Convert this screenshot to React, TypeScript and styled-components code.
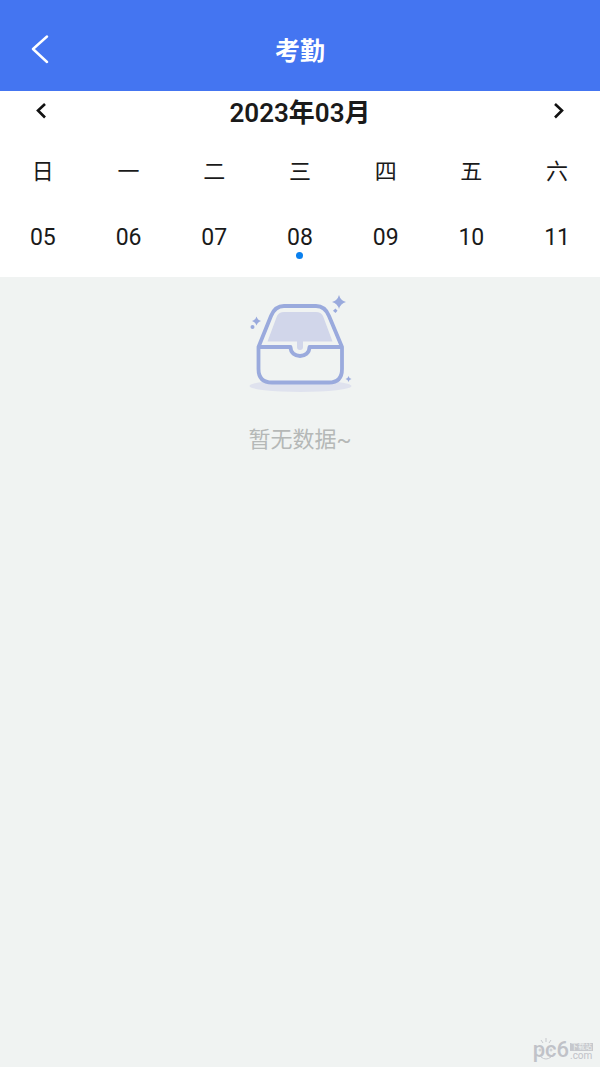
import React from "react";
import styled, { createGlobalStyle } from "styled-components";

const GlobalStyle = createGlobalStyle`
  *, *::before, *::after { box-sizing: border-box; }
  body {
    margin: 0;
    background: #f0f3f2;
    color: #1a1a1a;
    font-family: Roboto, "Noto Sans CJK SC", sans-serif;
  }
`;

const Page = styled.div`
  display: flex;
  flex-direction: column;
  min-height: 100vh;
`;

const Header = styled.header`
  display: grid;
  grid-template-columns: 80px 1fr 80px;
  align-items: center;
  padding: 24px 0 15px;
  background: #4475f1;
  color: #fff;
`;

const IconButton = styled.button`
  display: flex;
  align-items: center;
  justify-content: center;
  height: 52px;
  padding: 0;
  border: 0;
  background: none;
  color: inherit;
  cursor: pointer;
`;

const Title = styled.h1`
  margin: 0;
  padding-top: 4px;
  font-size: 25px;
  line-height: 48px;
  font-weight: 700;
  text-align: center;
`;

const Calendar = styled.section`
  padding-bottom: 18px;
  background: #fff;
`;

const MonthBar = styled.div`
  display: grid;
  grid-template-columns: 82px 1fr 82px;
  align-items: start;
`;

const MonthButton = styled(IconButton)`
  height: 40px;
`;

const Month = styled.h2`
  margin: 0;
  font-size: 26px;
  line-height: 44px;
  font-weight: 600;
  text-align: center;
`;

const Week = styled.table`
  width: 100%;
  border-collapse: collapse;
  table-layout: fixed;
`;

const WeekDay = styled.th`
  height: 70px;
  padding: 4px 0 0;
  font-size: 22px;
  line-height: 32px;
  font-weight: 400;
`;

const DayCell = styled.td`
  padding: 0;
`;

const DayButton = styled.button<{ $marked?: boolean }>`
  display: flex;
  flex-direction: column;
  align-items: center;
  width: 100%;
  padding: 19px 0 0;
  border: 0;
  background: none;
  color: inherit;
  font-family: inherit;
  font-size: 23px;
  line-height: 28px;
  cursor: pointer;

  &::after {
    content: "";
    width: 7px;
    height: 7px;
    border-radius: 50%;
    background: ${(p) => (p.$marked ? "#0a80ee" : "transparent")};
  }
`;

const Empty = styled.main`
  flex: 1;
  display: flex;
  flex-direction: column;
  align-items: center;
  padding-top: 13px;
`;

const EmptyText = styled.p`
  margin: 28px 0 0;
  color: #b5b8b7;
  font-size: 22px;
  line-height: 32px;
`;

const Watermark = styled.footer`
  display: flex;
  justify-content: flex-end;
  align-items: flex-end;
  gap: 1px;
  padding: 0 7px 6px;
  color: #c0c2c8;
`;

const Brand = styled.span`
  position: relative;
  font-size: 22px;
  line-height: 22px;
  font-weight: 500;
`;

const Rays = styled.svg`
  position: absolute;
  left: 4px;
  top: -3px;
`;

const BrandSide = styled.span`
  display: flex;
  flex-direction: column;
  font-size: 10px;
  line-height: 10px;
`;

const BrandTag = styled.span`
  padding: 0 1px;
  background: #c6c8cd;
  color: #f0f3f2;
  font-size: 7px;
  line-height: 8px;
`;

const weekDays = ["日", "一", "二", "三", "四", "五", "六"];
const days = ["05", "06", "07", "08", "09", "10", "11"];
const today = "08";

function EmptyBox() {
  return (
    <svg width="112" height="106" viewBox="244 290 112 106" fill="none" aria-hidden="true">
      <ellipse cx="300.500" cy="386" rx="51" ry="6" fill="#dfe2ee" />
      <path
        d="M258.500 347 271 316Q275 306 284 306H316Q325 306 329 316L342 347V369Q342 382.500 329 382.500H272Q258.500 382.500 258.500 369Z"
        fill="#f0f3f2"
      />
      <path d="M284 312H316Q321 312 323 316L332.500 341.500H303V347Q303 350 300 350T297 347V341.500H267.500L277 316Q279 312 284 312Z" fill="#d1d6ea" />
      <g stroke="#9aaadd" strokeWidth="3.800" strokeLinejoin="round">
        <path d="M258.500 347 271 316Q275 306 284 306H316Q325 306 329 316L342 347V369Q342 382.500 329 382.500H272Q258.500 382.500 258.500 369Z" />
        <path d="M258.500 347H290.500C290.500 359 309.500 359 309.500 347H342" />
      </g>
      <g fill="#9aaadd">
        <path d="M339 295Q340.500 300.500 346 302Q340.500 303.500 339 309Q337.500 303.500 332 302Q337.500 300.500 339 295Z" />
        <path d="M256.500 316.500Q257.500 320 261 321Q257.500 322 256.500 325.500Q255.500 322 252 321Q255.500 320 256.500 316.500Z" />
        <path d="M348.500 376Q349 378.500 351.500 379Q349 379.500 348.500 382Q348 379.500 345.500 379Q348 378.500 348.500 376Z" />
        <path d="M335.500 308.500 337.500 310.800 335.500 313 333 310.800Z" />
        <circle cx="252.500" cy="327" r="2" />
      </g>
    </svg>
  );
}

export default function App() {
  return (
    <Page>
      <GlobalStyle />
      <Header>
        <IconButton type="button" aria-label="返回">
          <svg width="20" height="30" viewBox="0 0 20 30" fill="none" stroke="currentColor" strokeWidth="2.400" strokeLinecap="round" strokeLinejoin="round">
            <path d="M17 1.500 3 14 17 27" />
          </svg>
        </IconButton>
        <Title>考勤</Title>
      </Header>
      <Calendar>
        <MonthBar>
          <MonthButton type="button" aria-label="上个月">
            <svg width="12" height="18" viewBox="0 0 12 18" fill="none" stroke="#111" strokeWidth="2.600">
              <path d="M10 2 3 8.500 10 15.500" />
            </svg>
          </MonthButton>
          <Month>2023年03月</Month>
          <MonthButton type="button" aria-label="下个月">
            <svg width="12" height="18" viewBox="0 0 12 18" fill="none" stroke="#111" strokeWidth="2.600">
              <path d="M2 2 9 8.500 2 15.500" />
            </svg>
          </MonthButton>
        </MonthBar>
        <Week>
          <thead>
            <tr>
              {weekDays.map((d) => (
                <WeekDay key={d} scope="col">{d}</WeekDay>
              ))}
            </tr>
          </thead>
          <tbody>
            <tr>
              {days.map((d) => (
                <DayCell key={d}>
                  <DayButton type="button" $marked={d === today}>{d}</DayButton>
                </DayCell>
              ))}
            </tr>
          </tbody>
        </Week>
      </Calendar>
      <Empty>
        <EmptyBox />
        <EmptyText>暂无数据~</EmptyText>
      </Empty>
      <Watermark>
        <Brand>
          pc6
          <Rays width="18" height="24" viewBox="0 0 18 24" fill="none" stroke="#c6c8cd" aria-hidden="true">
            <path d="M4 4 6 7M9 2V6M14 4 12 7M4 21Q9 25 14 21" />
            <circle cx="3" cy="14" r="1" />
            <circle cx="14" cy="14" r="1" />
          </Rays>
        </Brand>
        <BrandSide>
          <BrandTag>下载站</BrandTag>
          .com
        </BrandSide>
      </Watermark>
    </Page>
  );
}
